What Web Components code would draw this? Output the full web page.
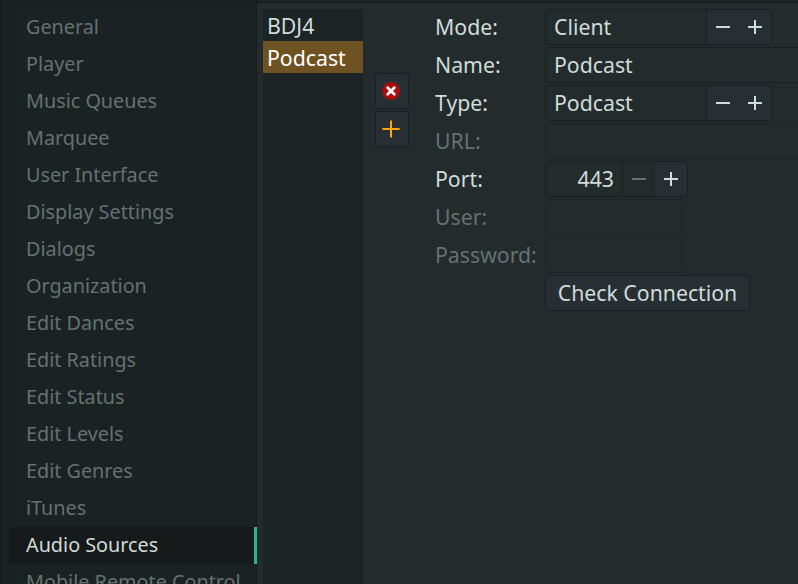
<!DOCTYPE html>
<html lang="en"><head><meta charset="utf-8"><title>Audio Sources</title>
<style>html,body{margin:0;height:584px;overflow:hidden;background:#232b2d}</style></head><body>
<settings-window></settings-window>
<script>
const define=(name,html,setup)=>customElements.define(name,class extends HTMLElement{
  constructor(){super();this.attachShadow({mode:'open'}).innerHTML=html;}
  connectedCallback(){if(setup)setup(this,this.shadowRoot);}
});

define('nav-item',`<style>
:host{display:flex;align-items:center;box-sizing:border-box;height:37px;padding:0 0 2px 16px;color:#667170;font-size:19.8px;white-space:nowrap}
:host([selected]){background:#161a1b;color:#cfdcd8;border-right:3px solid #2eb398}
</style><slot></slot>`);

define('source-row',`<style>
:host{display:flex;align-items:center;height:32px;padding-left:4px;white-space:nowrap}
:host([selected]){background:#6f5222;color:#fff}
</style><slot></slot>`);

define('icon-glyph',`<style>:host{display:block;width:18px;height:18px}svg{display:block}</style><svg width="18" height="18" viewBox="0 0 18 18"></svg>`,(el,root)=>{
  root.querySelector('svg').innerHTML={
    minus:'<path d="M2 8h14v2H2z" fill="currentColor"/>',
    plus:'<path d="M2 8h6V2h2v6h6v2h-6v6H8v-6H2z" fill="currentColor"/>',
    add:'<path d="M.4 8H8V.4h2V8h7.6v2H10v7.6H8V10H.4z" fill="#ffa600"/>',
    remove:'<circle cx="9" cy="9" r="8.9" fill="#ab0d0d"/><path d="M5.7 5.7l6.6 6.6M12.3 5.7l-6.6 6.6" stroke="#fff" stroke-width="2.7" stroke-linecap="round"/>'
  }[el.getAttribute('name')];
});

define('push-button',`<style>
:host{display:flex;align-items:center;justify-content:center;box-sizing:border-box;height:36px;border:1px solid #1a2022;border-radius:3px;background:#272f35;white-space:nowrap}
:host([square]){width:34px;padding-right:2px}
:host([wide]){width:205px;padding-bottom:1px}
</style><slot></slot>`);

define('text-field',`<style>
:host{display:flex;align-items:center;box-sizing:border-box;height:36px;padding:0 0 1px 8px;border:1px solid #1a2022;border-radius:3px;white-space:nowrap}
:host([long]){width:280px}
:host([short]){width:138px}
:host([disabled]){border-color:#1f2628}
</style><slot></slot>`);

define('spin-field',`<style>
:host{display:flex;box-sizing:border-box;height:36px;width:227px;border:1px solid #1a2022;border-radius:3px;overflow:hidden}
:host([numeric]){width:143px}
.v{flex:1;display:flex;align-items:center;padding:0 8px 1px;border-right:1px solid #1a2022}
:host([numeric]) .v{justify-content:flex-end}
.b{display:flex;align-items:center;justify-content:center;width:32px;background:#272f35}
:host([numeric]) .minus{background:none;color:#667170;box-sizing:border-box;border-right:1px solid #1f2628}
</style><div class="v"><slot></slot></div><div class="b minus"><icon-glyph name="minus"></icon-glyph></div><div class="b"><icon-glyph name="plus"></icon-glyph></div>`);

define('form-row',`<style>
:host{display:grid;grid-template-columns:110px auto;justify-content:start;align-items:center;height:36px}
:host([disabled]) span{color:#667170}
span{white-space:nowrap;padding-bottom:1px}
</style><span></span><slot></slot>`,(el,root)=>{root.querySelector('span').textContent=el.getAttribute('label')||'';});

const items=['General','Player','Music Queues','Marquee','User Interface','Display Settings','Dialogs','Organization','Edit Dances','Edit Ratings','Edit Status','Edit Levels','Edit Genres','iTunes','Audio Sources','Mobile Remote Control'];
define('settings-window',`<style>
:host{display:flex;box-sizing:border-box;width:798px;height:584px;overflow:hidden;font:21.25px "Noto Sans",sans-serif;color:#cfdcd8;background:#1c2224}
.edge{width:9px;box-sizing:border-box;border-left:1px solid #161b1c}
.frame{flex:1;min-width:0;display:flex;margin-top:2px;border-top:1px solid #161b1c;border-left:1px solid #161b1c;background:#232b2d}
nav{width:247px;height:581px;flex:none;box-sizing:border-box;padding-top:6px;background:#1b2224;box-shadow:inset -1px 0 #161b1c}
.list{width:100px;flex:none;margin:6px 0 0 6px;background:#1d2426}
.tools{display:flex;flex-direction:column;gap:2px;margin:70px 0 0 12px}
form{display:flex;flex-direction:column;gap:2px;margin:6px 0 0 26px;width:363px;flex:none;overflow:hidden}
</style><div class="edge"></div><div class="frame"><nav>${items.map(t=>`<nav-item${t==='Audio Sources'?' selected':''}>${t}</nav-item>`).join('')}</nav>
<div class="list"><source-row>BDJ4</source-row><source-row selected>Podcast</source-row></div>
<div class="tools"><push-button square><icon-glyph name="remove"></icon-glyph></push-button><push-button square><icon-glyph name="add"></icon-glyph></push-button></div>
<form>
<form-row label="Mode:"><spin-field>Client</spin-field></form-row>
<form-row label="Name:"><text-field long>Podcast</text-field></form-row>
<form-row label="Type:"><spin-field>Podcast</spin-field></form-row>
<form-row label="URL:" disabled><text-field long disabled></text-field></form-row>
<form-row label="Port:"><spin-field numeric>443</spin-field></form-row>
<form-row label="User:" disabled><text-field short disabled></text-field></form-row>
<form-row label="Password:" disabled><text-field short disabled></text-field></form-row>
<form-row><push-button wide>Check Connection</push-button></form-row>
</form></div>`);
</script></body></html>
